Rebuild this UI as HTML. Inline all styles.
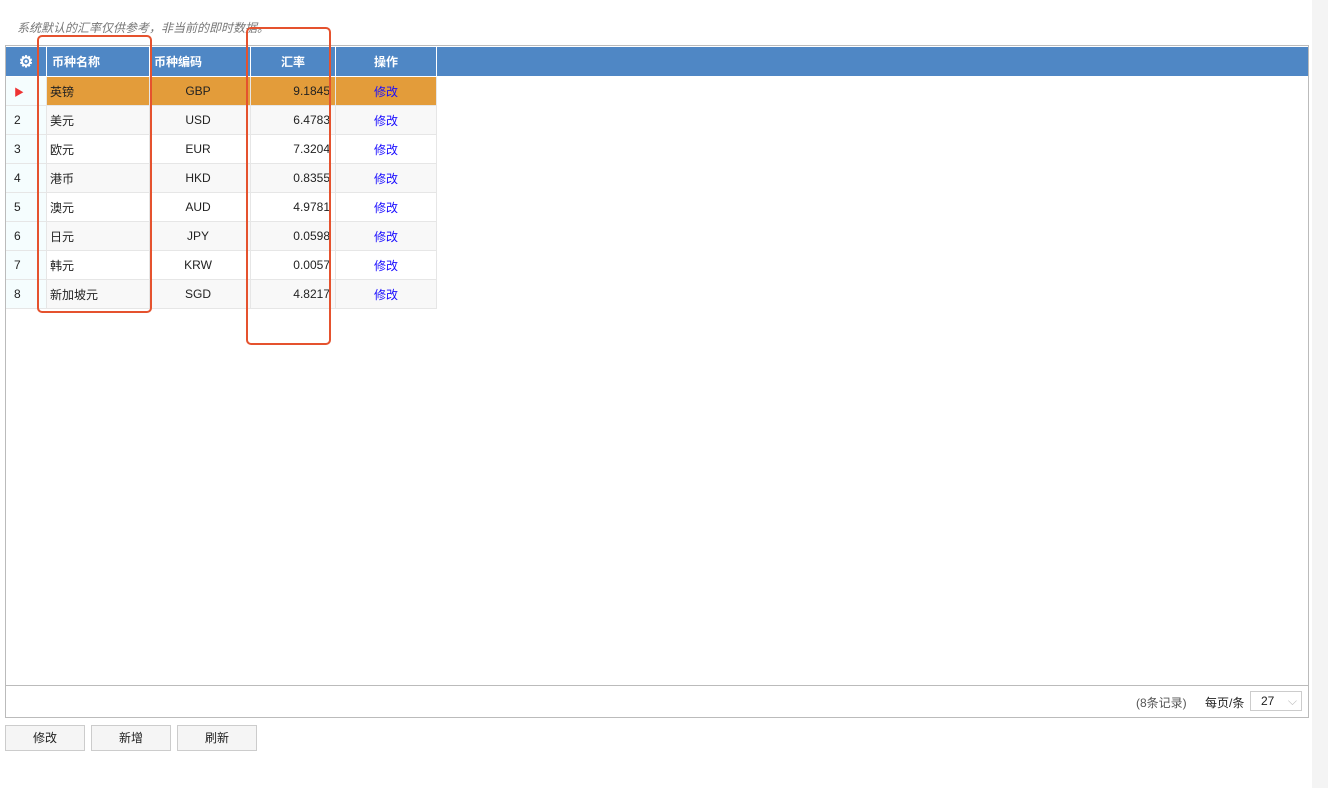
<!DOCTYPE html>
<html><head><meta charset="utf-8"><style>
body{margin:0;width:1328px;height:788px;background:#fff;font-family:"Liberation Sans","Noto Sans CJK SC",sans-serif;font-size:12px;color:#222;position:relative;overflow:hidden}
.strip{position:absolute;left:1312px;top:0;width:16px;height:788px;background:#f4f4f4}
.note{position:absolute;left:17px;top:19px;font-style:italic;color:#777;font-size:12px}
.frame{position:absolute;left:5px;top:45px;width:1302px;height:671px;border:1px solid #bbb;background:#fff}
table{border-collapse:collapse;position:absolute;left:0;top:1px}
td,th{height:28px;padding:0 4px;border-right:1px solid #e6e6e6;border-bottom:1px solid #e6e6e6;white-space:nowrap}
th{background:#4f87c5;color:#fff;font-weight:bold;height:29px;border-right:1px solid #fff;border-bottom:1px solid #fff}
.hdr{position:absolute;left:0;top:1px;width:1302px;height:29px;background:#4f87c5}
td.n{background:#f5fdfe;width:28px;padding-left:8px}
tr.sel td{background:#e39c3a}
tr.alt td{background:#f8f8f8}
tr.alt td.n,tr td.n{background:#f5fdfe}
a{color:#1a0dff;text-decoration:none}
.pager{position:absolute;left:0;top:639px;width:1302px;height:31px;border-top:1px solid #bbb}
.btn{position:absolute;top:725px;width:78px;height:24px;border:1px solid #ccc;background:#f5f5f5;text-align:center;line-height:24px;font-size:12px}
.red{position:absolute;border:2.5px solid #e5522e;border-radius:5px}
</style></head><body>
<div class="strip"></div>
<div class="note">系统默认的汇率仅供参考，非当前的即时数据。</div>
<div class="frame">
<div class="hdr"></div>
<table>
<tr><th style="width:32px;font-size:16px;padding:0 4px">⚙</th><th style="width:93px;text-align:left;padding-left:5px">币种名称</th><th style="width:92px;text-align:left;padding-left:4px">币种编码</th><th style="width:76px">汇率</th><th style="width:92px">操作</th></tr>
<tr class="sel"><td class="n" style="color:#e33;font-size:10px">▶</td><td style="padding-left:3px">英镑</td><td align="center" style="padding-right:8px">GBP</td><td align="right" style="padding-right:5px">9.1845</td><td align="center"><a>修改</a></td></tr>
<tr class="alt"><td class="n">2</td><td style="padding-left:3px">美元</td><td align="center" style="padding-right:8px">USD</td><td align="right" style="padding-right:5px">6.4783</td><td align="center"><a>修改</a></td></tr>
<tr><td class="n">3</td><td style="padding-left:3px">欧元</td><td align="center" style="padding-right:8px">EUR</td><td align="right" style="padding-right:5px">7.3204</td><td align="center"><a>修改</a></td></tr>
<tr class="alt"><td class="n">4</td><td style="padding-left:3px">港币</td><td align="center" style="padding-right:8px">HKD</td><td align="right" style="padding-right:5px">0.8355</td><td align="center"><a>修改</a></td></tr>
<tr><td class="n">5</td><td style="padding-left:3px">澳元</td><td align="center" style="padding-right:8px">AUD</td><td align="right" style="padding-right:5px">4.9781</td><td align="center"><a>修改</a></td></tr>
<tr class="alt"><td class="n">6</td><td style="padding-left:3px">日元</td><td align="center" style="padding-right:8px">JPY</td><td align="right" style="padding-right:5px">0.0598</td><td align="center"><a>修改</a></td></tr>
<tr><td class="n">7</td><td style="padding-left:3px">韩元</td><td align="center" style="padding-right:8px">KRW</td><td align="right" style="padding-right:5px">0.0057</td><td align="center"><a>修改</a></td></tr>
<tr class="alt"><td class="n">8</td><td style="padding-left:3px">新加坡元</td><td align="center" style="padding-right:8px">SGD</td><td align="right" style="padding-right:5px">4.8217</td><td align="center"><a>修改</a></td></tr>
</table>
<div class="pager">
<span style="position:absolute;left:1130px;top:8px;color:#555">(8条记录)</span>
<span style="position:absolute;left:1199px;top:8px">每页/条</span>
<div style="position:absolute;left:1244px;top:5px;width:50px;height:18px;border:1px solid #ccc;line-height:18px"><span style="margin-left:10px">27</span><span style="position:absolute;right:4px;top:0;color:#bbb">⌵</span></div>
</div>
</div>
<div class="btn" style="left:5px">修改</div>
<div class="btn" style="left:91px">新增</div>
<div class="btn" style="left:177px">刷新</div>
<div class="red" style="left:37px;top:35px;width:111px;height:274px"></div>
<div class="red" style="left:246px;top:27px;width:81px;height:314px"></div>
</body></html>
